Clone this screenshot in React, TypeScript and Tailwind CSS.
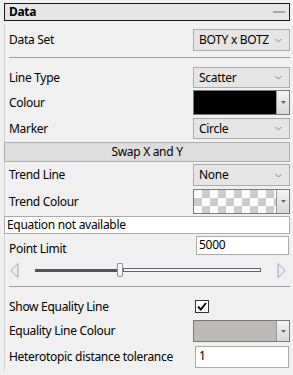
import React from "react"

const Chevron = () => (
  <svg width="7" height="5" viewBox="0 0 7 5" className="shrink-0">
    <path d="M0.5 1 L3.5 4 L6.5 1" fill="none" stroke="#808080" strokeWidth="1" />
  </svg>
)

function Dropdown({ value, h = "h-[22px]" }: { value: string; h?: string }) {
  return (
    <div
      className={`w-[97px] ${h} border border-[#acacac] bg-[#e5e5e5] flex items-center justify-between pl-[5px] pr-[7px] text-[12px] text-black`}
    >
      <span>{value}</span>
      <Chevron />
    </div>
  )
}

function ColourPicker({ swatch, h = "h-[25px]" }: { swatch: string; h?: string }) {
  return (
    <div className={`w-[97px] ${h} border border-[#7a7a7a] flex`}>
      <div className={`flex-1 ${swatch}`} />
      <div className="w-[13px] border-l border-[#9a9a9a] bg-gradient-to-b from-[#f4f4f4] to-[#d8d8d8] flex items-center justify-center">
        <svg width="5" height="3" viewBox="0 0 5 3">
          <path d="M0 0 L5 0 L2.5 3 Z" fill="#6a6a6a" />
        </svg>
      </div>
    </div>
  )
}

function Row({ label, children, className = "" }: { label: string; children: React.ReactNode; className?: string }) {
  return (
    <div className={`flex items-center justify-between ${className}`}>
      <span className="text-[12px] text-black leading-none">{label}</span>
      {children}
    </div>
  )
}

export default function App() {
  return (
    <div className="w-[293px] h-[375px] bg-[#f0f0f0] pl-1 pr-[3px] pt-[3px] font-['Noto_Sans',sans-serif] tracking-[-0.3px] overflow-hidden">
      {/* Header */}
      <div className="h-[18px] border border-[#1a1a1a] bg-[#e6e6e6] flex items-center justify-between pl-[4px] pr-[3px]">
        <span className="text-[12px] font-bold text-black leading-none">Data</span>
        <div className="w-[12px] h-[2px] bg-[#a8a8a8] mr-[1px]" />
      </div>

      <div className="mt-[3px] border-l border-[#d6d6d6] pl-[4px] pb-[3px] flex flex-col">
        <Row label="Data Set" className="mt-[5px]">
          <Dropdown value="BOTY x BOTZ" />
        </Row>
        <div className="mt-[6px] h-px bg-[#a0a0a0]" />

        <Row label="Line Type" className="mt-[9px]">
          <Dropdown value="Scatter" h="h-[21px]" />
        </Row>
        <Row label="Colour" className="mt-[2px]">
          <ColourPicker swatch="bg-black" />
        </Row>
        <Row label="Marker" className="mt-[3px]">
          <Dropdown value="Circle" h="h-[21px]" />
        </Row>

        <div className="-ml-[5px] mt-[3px] h-[20px] border border-[#adadad] bg-[#dddddd] flex items-center justify-center text-[12px] text-black">
          Swap X and Y
        </div>

        <Row label="Trend Line" className="mt-[2px]">
          <Dropdown value="None" />
        </Row>
        <Row label="Trend Colour" className="mt-[3px]">
          <ColourPicker swatch="bg-[conic-gradient(#cccccc_25%,#ffffff_0_50%,#cccccc_0_75%,#ffffff_0)] bg-[length:16px_16px]" />
        </Row>

        <div className="-ml-[5px] mt-[2px] h-[18px] border border-[#acacac] bg-white flex items-center pl-[2px] text-[12px] text-black">
          Equation not available
        </div>

        <Row label="Point Limit" className="mt-[2px] items-end">
          <div className="w-[93px] h-[19px] border border-[#acacac] bg-white text-[12px] text-black pl-[2px] leading-[15px] mr-[1px]">
            5000
          </div>
        </Row>

        {/* Slider */}
        <div className="mt-[7px] h-[16px] flex items-center pl-[1px] pr-[4px]">
          <svg width="9" height="15" viewBox="0 0 9 15" className="shrink-0">
            <path d="M8 0.5 L8 14.5 L0.8 7.5 Z" fill="#e8eef4" stroke="#9aa7b3" strokeWidth="1" />
          </svg>
          <div className="ml-[16px] flex-1 flex items-center relative h-[16px]">
            <div className="w-[82px] h-[3px] bg-[#4d585e]" />
            <div className="w-[6px] h-[14px] rounded-b-[2px] rounded-t-[1px] border border-[#8a9399] bg-[#f4f4f4]" />
            <div className="flex-1 h-[4px] border border-[#5c676d] bg-[#f7f7f7]" />
          </div>
          <svg width="9" height="15" viewBox="0 0 9 15" className="shrink-0 ml-[16px]">
            <path d="M1 0.5 L1 14.5 L8.2 7.5 Z" fill="#e8eef4" stroke="#9aa7b3" strokeWidth="1" />
          </svg>
        </div>

        <div className="mt-[8px] h-px bg-[#a0a0a0]" />

        <Row label="Show Equality Line" className="mt-[13px]">
          <div className="w-[14px] h-[13px] border border-[#333333] bg-white flex items-center justify-center mr-[81px]">
            <svg width="10" height="9" viewBox="0 0 10 9">
              <path d="M1 4.5 L3.8 7.5 L9 1" fill="none" stroke="#111" strokeWidth="2" />
            </svg>
          </div>
        </Row>
        <Row label="Equality Line Colour" className="mt-[7px]">
          <ColourPicker swatch="bg-[#bcbab6]" h="h-[22px]" />
        </Row>
        <Row label="Heterotopic distance tolerance" className="mt-[4px]">
          <div className="w-[94px] h-[22px] border border-[#acacac] bg-white text-[12px] text-black pl-[3px] leading-[17px] mr-[1px]">
            1
          </div>
        </Row>
      </div>
    </div>
  )
}
